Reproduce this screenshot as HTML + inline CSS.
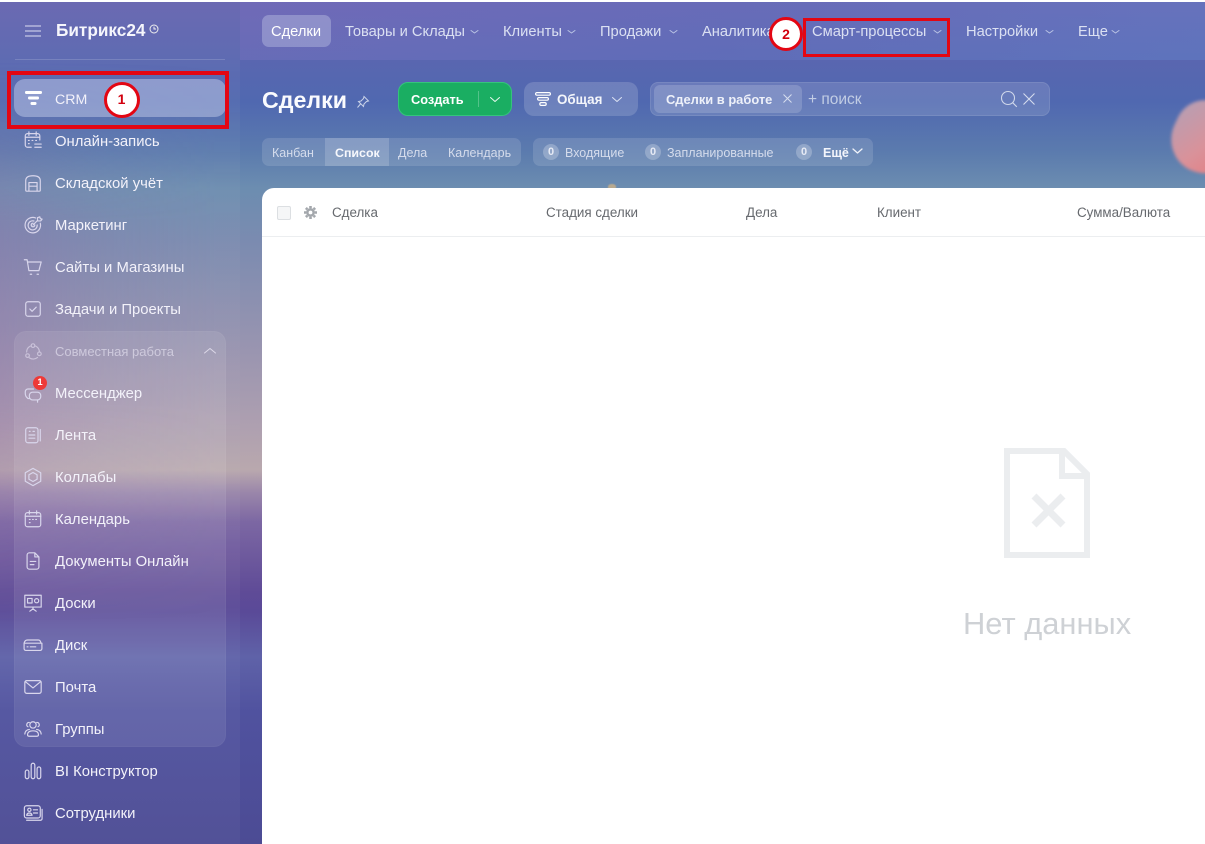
<!DOCTYPE html>
<html lang="ru"><head><meta charset="utf-8"><title>Сделки</title>
<style>
html,body{margin:0;padding:0;width:1205px;height:844px;overflow:hidden;background:#fff}
body{position:relative;font-family:"Liberation Sans",sans-serif;color:#fff}
.a{position:absolute;white-space:nowrap}
#bg{left:0;top:2px;width:1205px;height:842px;background:linear-gradient(180deg,#6664b0 0,#5068b0 100px,#5b7bae 150px,#6c8db0 186px,#7b8bb0 240px,#9a95b0 350px,#ad9fb0 420px,#b9a8ae 468px,#9b87aa 490px,#7c67a3 520px,#5f4b97 590px,#5a4a98 610px,#5f62a8 655px,#50529f 710px,#4c4b94 844px)}
#bgl{left:0;top:2px;width:240px;height:842px;background:linear-gradient(90deg,rgba(140,100,165,.3),rgba(130,110,170,.14) 45%,rgba(120,120,170,.03) 90%);-webkit-mask-image:linear-gradient(180deg,transparent 60px,#000 220px,#000 400px,transparent 620px);mask-image:linear-gradient(180deg,transparent 60px,#000 220px,#000 400px,transparent 620px)}
#bgs{left:0;top:2px;width:240px;height:842px;background:rgba(255,255,255,.035)}
#top{left:240px;top:2px;width:965px;height:58px;background:linear-gradient(90deg,rgba(135,120,200,.3),rgba(110,125,205,.28) 50%,rgba(105,150,220,.28))}
.m{font-size:14.85px;line-height:20px;left:55px;color:#f3f2fa;margin-top:1px}
.ic{position:absolute;left:23px;width:20px;height:20px;margin-top:1px;fill:none;stroke:#d9d6ec;stroke-width:1.300;stroke-linecap:round;stroke-linejoin:round}
.t{top:22px;font-size:14.7px;line-height:20px;color:#dbe0f2}
.ch{position:absolute;fill:none;stroke:#b9c3e4;stroke-width:1;stroke-linecap:round;stroke-linejoin:round}
.h{top:204px;font-size:13.4px;line-height:17px;color:#66696e}
.red{position:absolute;border:4px solid #e30613;box-sizing:border-box}
.num{position:absolute;width:36px;height:36px;box-sizing:border-box;border:3.5px solid #e30613;border-radius:50%;background:#fff;color:#d2000f;font-weight:bold;font-size:14px;text-align:center;line-height:29px}
.v{top:145px;font-size:12.5px;line-height:16px;color:#d5dcec}
.z{position:absolute;top:144px;width:16px;height:16px;border-radius:50%;background:rgba(255,255,255,.24);font-size:11px;font-weight:bold;line-height:16px;text-align:center;color:#e6eaf4}
</style></head><body>
<div class="a" id="bg"></div><div class="a" id="bgl"></div><div class="a" id="bgs"></div><div class="a" id="top"></div>

<!-- balloon -->
<div class="a" style="left:1172px;top:102px;width:70px;height:72px;border-radius:48% 40% 60% 55%;background:linear-gradient(120deg,#b3a0b6,#d9929a 55%,#e8797c);filter:blur(1.5px);transform:rotate(25deg)"></div>
<div class="a" style="left:608px;top:184px;width:8px;height:5px;background:#b8a98f;border-radius:50% 50% 0 0;filter:blur(.6px)"></div>

<!-- sidebar head -->
<svg class="a" style="left:25px;top:25px" width="16" height="12" fill="none" stroke="#c5c8e6" stroke-width="1.300"><path d="M0 1h16M0 6h16M0 11h16"/></svg>
<div class="a" style="left:56px;top:20px;font-size:17.200px;font-weight:bold;line-height:20px;color:#f6f6fc">Битрикс24</div>
<svg class="a" style="left:149px;top:24px" width="10" height="10" fill="none" stroke="#eee" stroke-width="1"><circle cx="5" cy="5" r="4"/><path d="M5 2.600V5h2"/></svg>
<div class="a" style="left:15px;top:59px;width:210px;height:1px;background:rgba(255,255,255,.16)"></div>

<!-- CRM -->
<div class="a" style="left:14px;top:79px;width:212px;height:38px;border-radius:11px;background:rgba(190,200,230,.52)"></div>
<svg class="a" style="left:25px;top:91px" width="17" height="15" fill="#fff"><rect x="0" y="0" width="17" height="3" rx="1.200"/><rect x="3" y="5.500" width="11" height="3" rx="1.200"/><rect x="5.500" y="11" width="6" height="3" rx="1.200"/></svg>
<div class="a m" style="top:89px;font-size:14.200px">CRM</div>
<div class="a m" style="top:131px">Онлайн-запись</div>
<div class="a m" style="top:173px">Складской учёт</div>
<div class="a m" style="top:215px">Маркетинг</div>
<div class="a m" style="top:257px">Сайты и Магазины</div>
<div class="a m" style="top:299px">Задачи и Проекты</div>

<!-- group -->
<div class="a" style="left:14px;top:331px;width:212px;height:416px;border-radius:12px;background:rgba(255,255,255,.085);box-shadow:inset 0 0 0 1px rgba(255,255,255,.03)"></div>
<div class="a" style="left:55px;top:343px;font-size:13px;line-height:17px;color:rgba(235,232,245,.6)">Совместная работа</div>
<svg class="ch" style="left:203px;top:347px;stroke:#dcd8e8" width="14" height="8"><path d="M1.500 6L7 1.500 12.500 6"/></svg>
<div class="a m" style="top:383px">Мессенджер</div>
<div class="a m" style="top:425px">Лента</div>
<div class="a m" style="top:467px">Коллабы</div>
<div class="a m" style="top:509px">Календарь</div>
<div class="a m" style="top:551px">Документы Онлайн</div>
<div class="a m" style="top:593px">Доски</div>
<div class="a m" style="top:635px">Диск</div>
<div class="a m" style="top:677px">Почта</div>
<div class="a m" style="top:719px">Группы</div>
<div class="a m" style="top:761px">BI Конструктор</div>
<div class="a m" style="top:803px">Сотрудники</div>

<!-- icons -->
<svg class="ic" style="top:129px" viewBox="0 0 22 22"><path d="M9 19H5a2.500 2.500 0 0 1-2.500-2.500v-10A2.500 2.500 0 0 1 5 4h11a2.500 2.500 0 0 1 2.500 2.500V11M6.500 2v4M14.500 2v4M2.500 8h16M6 11.500h.8M10 11.500h.8M14 11.500h.8M6 15h.8M13 15.500h7M13 19h7"/></svg>
<svg class="ic" style="top:172px" viewBox="0 0 22 22"><path d="M3 19V8.500Q3 3 11 3t8 5.500V19a1 1 0 0 1-1 1H4a1 1 0 0 1-1-1zM6.500 20v-9.500h9V20M6.500 14.500h9"/></svg>
<svg class="ic" style="top:214px" viewBox="0 0 22 22"><path d="M14 3.300A8.500 8.500 0 1 0 19 9M12 6.600A5 5 0 1 0 15.600 11M11 11l5-5M16 6V3l2.500-1 .5 2 2 .5-1.500 2H16M11 9a2 2 0 1 0 2 2"/></svg>
<svg class="ic" style="top:256px" viewBox="0 0 22 22"><path d="M1.500 3h3l2 12h11l2.500-9.500H5M8 19h1.500M15.500 19H17"/></svg>
<svg class="ic" style="top:298px" viewBox="0 0 22 22"><rect x="3" y="3" width="16" height="16" rx="2.500"/><path d="M7.500 11l2.500 2.500 4.500-4.500"/></svg>
<svg class="ic" style="top:341px;stroke:rgba(235,230,245,.55)" viewBox="0 0 22 22"><path d="M8 4.500A7.500 7.500 0 0 0 4 11M14 4.500A7.500 7.500 0 0 1 18 10M7 17.500A7.500 7.500 0 0 0 16 17"/><circle cx="11" cy="4" r="2"/><circle cx="5" cy="15" r="2"/><circle cx="18" cy="13" r="2"/></svg>
<svg class="ic" style="top:383px" viewBox="0 0 22 22"><path d="M7 16H5.500L4 14.500Q2.500 13 2.500 10V8.500a3 3 0 0 1 3-3h6"/><rect x="7" y="9" width="12.500" height="8.500" rx="3.500"/><path d="M16 17.500V20"/></svg>
<svg class="ic" style="top:424px" viewBox="0 0 22 22"><rect x="3" y="3" width="13.500" height="16.500" rx="2.500"/><path d="M19 5v12.500M7 7h.8M11 7h1.500M6.500 11h6.500M6.500 14.500h6.500"/></svg>
<svg class="ic" style="top:466px" viewBox="0 0 22 22"><path d="M11 1.500l8.500 4.800v9.400L11 20.500l-8.500-4.800V6.300z"/><path d="M11 6l4.500 2.500v5L11 16l-4.500-2.500v-5z"/></svg>
<svg class="ic" style="top:508px" viewBox="0 0 22 22"><rect x="2.500" y="4" width="17" height="15.500" rx="2.500"/><path d="M7 2v3.500M15 2v3.500M2.500 8h17M7 11.500h.8M10.500 11.500h.8M14 11.500h.8M7 15h.8"/></svg>
<svg class="ic" style="top:550px" viewBox="0 0 22 22"><path d="M13 2H7A2.500 2.500 0 0 0 4.500 4.500v13A2.500 2.500 0 0 0 7 20h8a2.500 2.500 0 0 0 2.500-2.500V6.500zM13 2v4.500h4.500M8 11.500h6M8 15h4"/></svg>
<svg class="ic" style="top:592px" viewBox="0 0 22 22"><path d="M2 2.500h18v13H2zM11 15.500V18M7.500 20l3.500-2.500 3.500 2.500"/><rect x="5" y="6" width="5" height="5"/><circle cx="15" cy="8.500" r="2.300"/></svg>
<svg class="ic" style="top:634px" viewBox="0 0 22 22"><path d="M5 5.500h12q2 0 2.800 3.500H1.200Q2 5.500 5 5.500zM1.200 9H20.800V15a2 2 0 0 1-2 2H3.200a2 2 0 0 1-2-2zM4.500 13h1M8 13h6"/></svg>
<svg class="ic" style="top:676px" viewBox="0 0 22 22"><rect x="2" y="4" width="18" height="14" rx="2"/><path d="M2.500 5l8.500 7 8.500-7"/></svg>
<svg class="ic" style="top:718px" viewBox="0 0 22 22"><circle cx="11" cy="6.500" r="3.500"/><path d="M5.500 8.500A2.500 2.500 0 0 1 7 3.800M16.500 8.500A2.500 2.500 0 0 0 15 3.800M2 16.500Q2.500 12 7 11.500M20 16.500Q19.500 12 15 11.500M5 17.500Q5 13 11 13t6 4.500q0 1.500-2 1.500H7q-2 0-2-1.500z"/></svg>
<svg class="ic" style="top:760px" viewBox="0 0 22 22"><rect x="2.500" y="10" width="4" height="9.500" rx="2"/><rect x="9" y="2.500" width="4" height="17" rx="2"/><rect x="15.500" y="6.500" width="4" height="13" rx="2"/></svg>
<svg class="ic" style="top:802px" viewBox="0 0 22 22"><rect x="1.500" y="3" width="17.500" height="13.500" rx="2.500"/><path d="M4 19h15.500a2 2 0 0 0 1.500-2V7M11.500 7.500H16M11.500 11H16"/><circle cx="7" cy="7.500" r="1.800"/><path d="M4 13.500q.5-2.500 3-2.500t3 2.500z"/></svg>

<!-- badge -->
<div class="a" style="left:33px;top:376px;width:14px;height:14px;border-radius:50%;background:#ee3a38;font-size:9.500px;font-weight:bold;line-height:14px;text-align:center;color:#fff">1</div>

<!-- top nav -->
<div class="a" style="left:262px;top:15px;width:69px;height:32px;border-radius:7px;background:rgba(200,205,235,.38)"></div>
<div class="a t" style="left:271px;color:#fff">Сделки</div>
<div class="a t" style="left:345px">Товары и Склады</div>
<svg class="ch" style="left:470px;top:29px" width="9" height="6"><path d="M1 1.500l3.500 2.500L8 1.500"/></svg>
<div class="a t" style="left:503px">Клиенты</div>
<svg class="ch" style="left:567px;top:29px" width="9" height="6"><path d="M1 1.500l3.500 2.500L8 1.500"/></svg>
<div class="a t" style="left:600px">Продажи</div>
<svg class="ch" style="left:669px;top:29px" width="9" height="6"><path d="M1 1.500l3.500 2.500L8 1.500"/></svg>
<div class="a t" style="left:702px">Аналитика</div>
<div class="a t" style="left:812px">Смарт-процессы</div>
<svg class="ch" style="left:933px;top:29px" width="9" height="6"><path d="M1 1.500l3.500 2.500L8 1.500"/></svg>
<div class="a t" style="left:966px">Настройки</div>
<svg class="ch" style="left:1045px;top:29px" width="9" height="6"><path d="M1 1.500l3.500 2.500L8 1.500"/></svg>
<div class="a t" style="left:1078px">Еще</div>
<svg class="ch" style="left:1111px;top:29px" width="9" height="6"><path d="M1 1.500l3.500 2.500L8 1.500"/></svg>

<!-- title row -->
<div class="a" style="left:262px;top:85px;font-size:23.200px;font-weight:bold;line-height:30px;color:#fafbfe">Сделки</div>
<svg class="a" style="left:356px;top:95px" width="14" height="14" fill="none" stroke="#c9d2e8" stroke-width="1"><path d="M8 1.500l4.500 4.500-2 .5L8 9l-.5 2.500L2.500 6.500 5 6l2.500-2.500zM4.500 9L1.500 12.500"/></svg>

<div class="a" style="left:398px;top:82px;width:114px;height:34px;box-sizing:border-box;border-radius:10px;background:#1aae62;border:1px solid #35c47c"></div>
<div class="a" style="left:411px;top:91px;font-size:12.800px;font-weight:bold;line-height:17px;color:#fff">Создать</div>
<div class="a" style="left:478px;top:91px;width:1px;height:16px;background:rgba(255,255,255,.25)"></div>
<svg class="ch" style="left:489px;top:96px;stroke:#e8f8ef" width="12" height="8"><path d="M1.500 1.500L6 5.500l4.500-4"/></svg>

<div class="a" style="left:524px;top:82px;width:114px;height:34px;border-radius:10px;background:rgba(255,255,255,.16)"></div>
<svg class="a" style="left:535px;top:92px" width="16" height="15" fill="none" stroke="#fff" stroke-width="1.200"><rect x=".6" y=".6" width="14.800" height="2.600" rx="1.300"/><rect x="2.600" y="5.600" width="10.800" height="2.600" rx="1.300"/><rect x="4.800" y="10.600" width="6.400" height="2.800" rx="1.400"/></svg>
<div class="a" style="left:557px;top:91px;font-size:13.400px;font-weight:bold;line-height:17px;color:#f4f6fb">Общая</div>
<svg class="ch" style="left:611px;top:96px;stroke:#dbe2f2" width="12" height="8"><path d="M1.500 1.500L6 5.500l4.500-4"/></svg>

<div class="a" style="left:650px;top:82px;width:400px;height:34px;box-sizing:border-box;border-radius:8px;background:rgba(255,255,255,.13);border:1px solid rgba(255,255,255,.09)"></div>
<div class="a" style="left:654px;top:85px;width:148px;height:28px;border-radius:6px;background:rgba(255,255,255,.16)"></div>
<div class="a" style="left:666px;top:91px;font-size:12.900px;line-height:17px;font-weight:bold;color:#eef1f9">Сделки в работе</div>
<svg class="a" style="left:783px;top:94px" width="9" height="9" stroke="#d7deee" stroke-width="1"><path d="M.5.500l8 8M8.500.500l-8 8"/></svg>
<div class="a" style="left:808px;top:91px;font-size:15.500px;line-height:18px;color:#c2cde4">+ поиск</div>
<svg class="a" style="left:1000px;top:90px" width="18" height="18" fill="none" stroke="#cfd7ea" stroke-width="1.100"><circle cx="8" cy="8" r="6.500"/><path d="M12.800 12.800l4 4"/></svg>
<svg class="a" style="left:1023px;top:93px" width="12" height="12" stroke="#d5dcee" stroke-width="1.100"><path d="M.5.500l11 11M11.500.500l-11 11"/></svg>

<!-- views row -->
<div class="a" style="left:262px;top:138px;width:259px;height:28px;border-radius:7px;background:rgba(255,255,255,.13)"></div>
<div class="a" style="left:325px;top:138px;width:64px;height:28px;background:rgba(255,255,255,.17)"></div>
<div class="a v" style="left:272px">Канбан</div>
<div class="a v" style="left:335px;font-weight:bold;color:#f7f8fc;font-size:12.400px">Список</div>
<div class="a v" style="left:398px">Дела</div>
<div class="a v" style="left:448px">Календарь</div>

<div class="a" style="left:533px;top:138px;width:340px;height:28px;border-radius:7px;background:rgba(255,255,255,.13)"></div>
<div class="z" style="left:543px">0</div><div class="a v" style="left:565px">Входящие</div>
<div class="z" style="left:645px">0</div><div class="a v" style="left:667px">Запланированные</div>
<div class="z" style="left:796px">0</div><div class="a v" style="left:823px;font-weight:bold;color:#f3f5fb">Ещё</div>
<svg class="ch" style="left:852px;top:148px;stroke:#f0f3fa;stroke-width:1.300" width="11" height="7"><path d="M1 1l4.500 4L10 1"/></svg>

<!-- table -->
<div class="a" style="left:262px;top:188px;width:943px;height:656px;background:#fff;border-radius:12px 0 0 0"></div>
<div class="a" style="left:262px;top:236px;width:943px;height:1px;background:#eceef0"></div>
<div class="a" style="left:277px;top:206px;width:14px;height:14px;box-sizing:border-box;border:1px solid #dcdfe2;border-radius:2px;background:#f5f6f7"></div>
<svg class="a" style="left:304px;top:206px" width="13" height="13" viewBox="0 0 13 13" fill="none" stroke="#a3a7ac" stroke-width="2.600"><circle cx="6.500" cy="6.500" r="3.200"/><path d="M6.500 0v2M6.500 11v2M0 6.500h2M11 6.500h2M1.900 1.900l1.400 1.400M9.700 9.700l1.400 1.400M1.900 11.100l1.400-1.400M9.700 3.300l1.400-1.400"/></svg>
<div class="a h" style="left:332px">Сделка</div>
<div class="a h" style="left:546px">Стадия сделки</div>
<div class="a h" style="left:746px">Дела</div>
<div class="a h" style="left:877px">Клиент</div>
<div class="a h" style="left:1077px">Сумма/Валюта</div>

<!-- empty -->
<svg class="a" style="left:1004px;top:448px" width="87" height="111" viewBox="0 0 87 111" fill="none" stroke="#ebedef" stroke-width="6"><path d="M3 3H60L83 26V107H3z"/><path d="M58 3V28H83"/><path d="M30 48L59 77M59 48L30 77" stroke-width="7"/></svg>
<div class="a" style="left:963px;top:606px;font-size:30.900px;line-height:36px;color:#ced1d5">Нет данных</div>

<!-- annotations -->
<div class="red" style="left:7px;top:71px;width:222px;height:58px"></div>
<div class="num" style="left:103.500px;top:82px">1</div>
<div class="red" style="left:803px;top:18px;width:147px;height:39px;border-width:3.500px"></div>
<div class="num" style="left:769px;top:17px;width:34px;height:34px;line-height:28px;border-width:3px">2</div>
</body></html>
